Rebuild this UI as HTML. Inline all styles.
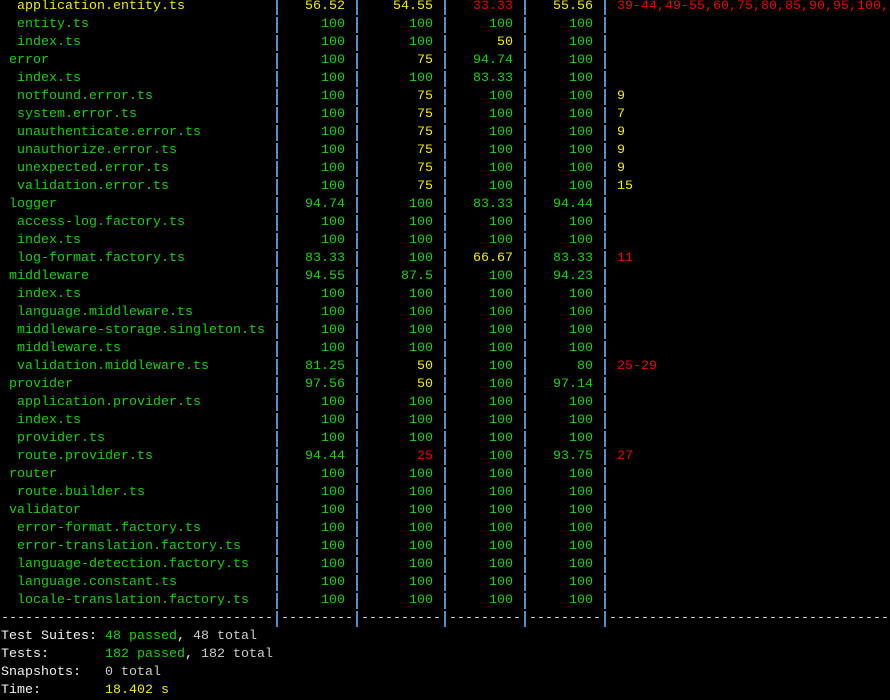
<!DOCTYPE html>
<html><head><meta charset="utf-8">
<style>
html,body{margin:0;padding:0;background:#000;width:890px;height:699px;overflow:hidden}
#t{position:absolute;left:1px;top:-2px;font-family:"Liberation Mono",monospace;font-size:13.333px;color:#f2f2f2;width:1000px}
.l{height:18px;line-height:18px;white-space:pre}
.l>span{display:inline-block;vertical-align:top;box-sizing:border-box}
.n{width:272px;padding-left:16px}
.n.d{padding-left:8px}
.p{width:8px;color:transparent;background:linear-gradient(to right,transparent 3px,#5b8fc8 3px,#5b8fc8 5px,transparent 5px) no-repeat 0 1px/8px 16px}
.c{width:72px;text-align:right;padding-right:8px}
.c.b{width:80px}
.u{padding-left:8px}
.g{color:#16d20e}.y{color:#f2ec00}.r{color:#ee0000}.w{color:#f2f2f2}.gr{color:#cccccc}
.dash{color:#d0d0d0}
.dash .p{display:inline-block;vertical-align:top}
</style></head><body>
<div id="t">
<div class="l"><span class="n y">application.entity.ts</span><span class="p">|</span><span class="c y">56.52</span><span class="p">|</span><span class="c b y">54.55</span><span class="p">|</span><span class="c r">33.33</span><span class="p">|</span><span class="c y">55.56</span><span class="p">|</span><span class="u r">39-44,49-55,60,75,80,85,90,95,100,105</span></div>
<div class="l"><span class="n g">entity.ts</span><span class="p">|</span><span class="c g">100</span><span class="p">|</span><span class="c b g">100</span><span class="p">|</span><span class="c g">100</span><span class="p">|</span><span class="c g">100</span><span class="p">|</span></div>
<div class="l"><span class="n g">index.ts</span><span class="p">|</span><span class="c g">100</span><span class="p">|</span><span class="c b g">100</span><span class="p">|</span><span class="c y">50</span><span class="p">|</span><span class="c g">100</span><span class="p">|</span></div>
<div class="l"><span class="n d g">error</span><span class="p">|</span><span class="c g">100</span><span class="p">|</span><span class="c b y">75</span><span class="p">|</span><span class="c g">94.74</span><span class="p">|</span><span class="c g">100</span><span class="p">|</span></div>
<div class="l"><span class="n g">index.ts</span><span class="p">|</span><span class="c g">100</span><span class="p">|</span><span class="c b g">100</span><span class="p">|</span><span class="c g">83.33</span><span class="p">|</span><span class="c g">100</span><span class="p">|</span></div>
<div class="l"><span class="n g">notfound.error.ts</span><span class="p">|</span><span class="c g">100</span><span class="p">|</span><span class="c b y">75</span><span class="p">|</span><span class="c g">100</span><span class="p">|</span><span class="c g">100</span><span class="p">|</span><span class="u y">9</span></div>
<div class="l"><span class="n g">system.error.ts</span><span class="p">|</span><span class="c g">100</span><span class="p">|</span><span class="c b y">75</span><span class="p">|</span><span class="c g">100</span><span class="p">|</span><span class="c g">100</span><span class="p">|</span><span class="u y">7</span></div>
<div class="l"><span class="n g">unauthenticate.error.ts</span><span class="p">|</span><span class="c g">100</span><span class="p">|</span><span class="c b y">75</span><span class="p">|</span><span class="c g">100</span><span class="p">|</span><span class="c g">100</span><span class="p">|</span><span class="u y">9</span></div>
<div class="l"><span class="n g">unauthorize.error.ts</span><span class="p">|</span><span class="c g">100</span><span class="p">|</span><span class="c b y">75</span><span class="p">|</span><span class="c g">100</span><span class="p">|</span><span class="c g">100</span><span class="p">|</span><span class="u y">9</span></div>
<div class="l"><span class="n g">unexpected.error.ts</span><span class="p">|</span><span class="c g">100</span><span class="p">|</span><span class="c b y">75</span><span class="p">|</span><span class="c g">100</span><span class="p">|</span><span class="c g">100</span><span class="p">|</span><span class="u y">9</span></div>
<div class="l"><span class="n g">validation.error.ts</span><span class="p">|</span><span class="c g">100</span><span class="p">|</span><span class="c b y">75</span><span class="p">|</span><span class="c g">100</span><span class="p">|</span><span class="c g">100</span><span class="p">|</span><span class="u y">15</span></div>
<div class="l"><span class="n d g">logger</span><span class="p">|</span><span class="c g">94.74</span><span class="p">|</span><span class="c b g">100</span><span class="p">|</span><span class="c g">83.33</span><span class="p">|</span><span class="c g">94.44</span><span class="p">|</span></div>
<div class="l"><span class="n g">access-log.factory.ts</span><span class="p">|</span><span class="c g">100</span><span class="p">|</span><span class="c b g">100</span><span class="p">|</span><span class="c g">100</span><span class="p">|</span><span class="c g">100</span><span class="p">|</span></div>
<div class="l"><span class="n g">index.ts</span><span class="p">|</span><span class="c g">100</span><span class="p">|</span><span class="c b g">100</span><span class="p">|</span><span class="c g">100</span><span class="p">|</span><span class="c g">100</span><span class="p">|</span></div>
<div class="l"><span class="n g">log-format.factory.ts</span><span class="p">|</span><span class="c g">83.33</span><span class="p">|</span><span class="c b g">100</span><span class="p">|</span><span class="c y">66.67</span><span class="p">|</span><span class="c g">83.33</span><span class="p">|</span><span class="u r">11</span></div>
<div class="l"><span class="n d g">middleware</span><span class="p">|</span><span class="c g">94.55</span><span class="p">|</span><span class="c b g">87.5</span><span class="p">|</span><span class="c g">100</span><span class="p">|</span><span class="c g">94.23</span><span class="p">|</span></div>
<div class="l"><span class="n g">index.ts</span><span class="p">|</span><span class="c g">100</span><span class="p">|</span><span class="c b g">100</span><span class="p">|</span><span class="c g">100</span><span class="p">|</span><span class="c g">100</span><span class="p">|</span></div>
<div class="l"><span class="n g">language.middleware.ts</span><span class="p">|</span><span class="c g">100</span><span class="p">|</span><span class="c b g">100</span><span class="p">|</span><span class="c g">100</span><span class="p">|</span><span class="c g">100</span><span class="p">|</span></div>
<div class="l"><span class="n g">middleware-storage.singleton.ts</span><span class="p">|</span><span class="c g">100</span><span class="p">|</span><span class="c b g">100</span><span class="p">|</span><span class="c g">100</span><span class="p">|</span><span class="c g">100</span><span class="p">|</span></div>
<div class="l"><span class="n g">middleware.ts</span><span class="p">|</span><span class="c g">100</span><span class="p">|</span><span class="c b g">100</span><span class="p">|</span><span class="c g">100</span><span class="p">|</span><span class="c g">100</span><span class="p">|</span></div>
<div class="l"><span class="n g">validation.middleware.ts</span><span class="p">|</span><span class="c g">81.25</span><span class="p">|</span><span class="c b y">50</span><span class="p">|</span><span class="c g">100</span><span class="p">|</span><span class="c g">80</span><span class="p">|</span><span class="u r">25-29</span></div>
<div class="l"><span class="n d g">provider</span><span class="p">|</span><span class="c g">97.56</span><span class="p">|</span><span class="c b y">50</span><span class="p">|</span><span class="c g">100</span><span class="p">|</span><span class="c g">97.14</span><span class="p">|</span></div>
<div class="l"><span class="n g">application.provider.ts</span><span class="p">|</span><span class="c g">100</span><span class="p">|</span><span class="c b g">100</span><span class="p">|</span><span class="c g">100</span><span class="p">|</span><span class="c g">100</span><span class="p">|</span></div>
<div class="l"><span class="n g">index.ts</span><span class="p">|</span><span class="c g">100</span><span class="p">|</span><span class="c b g">100</span><span class="p">|</span><span class="c g">100</span><span class="p">|</span><span class="c g">100</span><span class="p">|</span></div>
<div class="l"><span class="n g">provider.ts</span><span class="p">|</span><span class="c g">100</span><span class="p">|</span><span class="c b g">100</span><span class="p">|</span><span class="c g">100</span><span class="p">|</span><span class="c g">100</span><span class="p">|</span></div>
<div class="l"><span class="n g">route.provider.ts</span><span class="p">|</span><span class="c g">94.44</span><span class="p">|</span><span class="c b r">25</span><span class="p">|</span><span class="c g">100</span><span class="p">|</span><span class="c g">93.75</span><span class="p">|</span><span class="u r">27</span></div>
<div class="l"><span class="n d g">router</span><span class="p">|</span><span class="c g">100</span><span class="p">|</span><span class="c b g">100</span><span class="p">|</span><span class="c g">100</span><span class="p">|</span><span class="c g">100</span><span class="p">|</span></div>
<div class="l"><span class="n g">route.builder.ts</span><span class="p">|</span><span class="c g">100</span><span class="p">|</span><span class="c b g">100</span><span class="p">|</span><span class="c g">100</span><span class="p">|</span><span class="c g">100</span><span class="p">|</span></div>
<div class="l"><span class="n d g">validator</span><span class="p">|</span><span class="c g">100</span><span class="p">|</span><span class="c b g">100</span><span class="p">|</span><span class="c g">100</span><span class="p">|</span><span class="c g">100</span><span class="p">|</span></div>
<div class="l"><span class="n g">error-format.factory.ts</span><span class="p">|</span><span class="c g">100</span><span class="p">|</span><span class="c b g">100</span><span class="p">|</span><span class="c g">100</span><span class="p">|</span><span class="c g">100</span><span class="p">|</span></div>
<div class="l"><span class="n g">error-translation.factory.ts</span><span class="p">|</span><span class="c g">100</span><span class="p">|</span><span class="c b g">100</span><span class="p">|</span><span class="c g">100</span><span class="p">|</span><span class="c g">100</span><span class="p">|</span></div>
<div class="l"><span class="n g">language-detection.factory.ts</span><span class="p">|</span><span class="c g">100</span><span class="p">|</span><span class="c b g">100</span><span class="p">|</span><span class="c g">100</span><span class="p">|</span><span class="c g">100</span><span class="p">|</span></div>
<div class="l"><span class="n g">language.constant.ts</span><span class="p">|</span><span class="c g">100</span><span class="p">|</span><span class="c b g">100</span><span class="p">|</span><span class="c g">100</span><span class="p">|</span><span class="c g">100</span><span class="p">|</span></div>
<div class="l"><span class="n g">locale-translation.factory.ts</span><span class="p">|</span><span class="c g">100</span><span class="p">|</span><span class="c b g">100</span><span class="p">|</span><span class="c g">100</span><span class="p">|</span><span class="c g">100</span><span class="p">|</span></div>
<div class="l dash">----------------------------------<span class="p">|</span>---------<span class="p">|</span>----------<span class="p">|</span>---------<span class="p">|</span>---------<span class="p">|</span>----------------------------------------</div>
<div class="l w">Test Suites: <span class="g">48 passed</span>, <span class="gr">48 total</span></div>
<div class="l w">Tests:       <span class="g">182 passed</span>, <span class="gr">182 total</span></div>
<div class="l w">Snapshots:   <span class="gr">0 total</span></div>
<div class="l w">Time:        <span class="y">18.402 s</span></div>
</div>
</body></html>
